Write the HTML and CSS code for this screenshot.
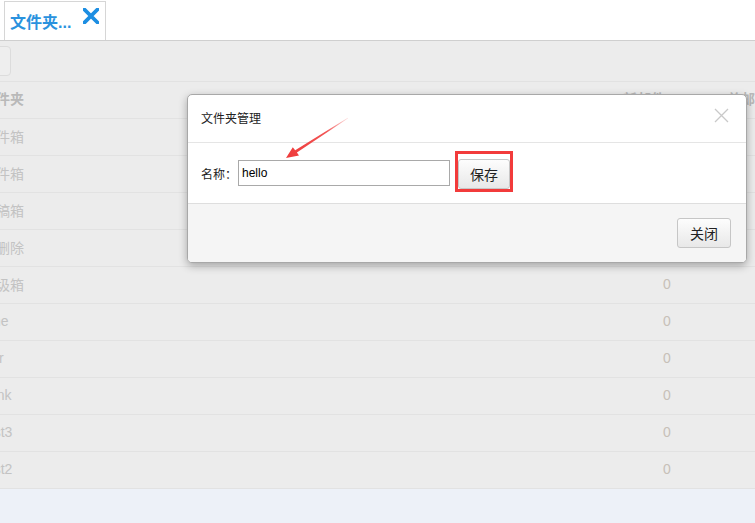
FILE: index.html
```html
<!DOCTYPE html>
<html>
<head>
    <title>文件夹管理</title>
    <meta charset="utf-8" />
    <link rel="stylesheet" href="styles.css">
</head>
<body>
    <div class="tabbar">
        <div class="tab">
            <span class="tab-title">文件夹...</span>
            <svg class="tab-close" width="16" height="16" viewBox="0 0 16 16">
                <path d="M1.5 1.5 L14.5 14.5 M14.5 1.5 L1.5 14.5" stroke="#1d8ee2" stroke-width="3.8" stroke-linecap="square" />
            </svg>
        </div>
    </div>

    <div class="page">
        <div class="toolbar"><span class="tool-btn"></span></div>

        <div class="grid">
            <div class="row head"><span class="name">文件夹</span><span class="num">新邮件</span><span class="total">总邮件</span></div>
            <div class="row"><span class="name">收件箱</span><span class="num"></span><span class="total"></span></div>
            <div class="row"><span class="name">发件箱</span><span class="num"></span><span class="total"></span></div>
            <div class="row"><span class="name">草稿箱</span><span class="num"></span><span class="total"></span></div>
            <div class="row"><span class="name">已删除</span><span class="num"></span><span class="total"></span></div>
            <div class="row"><span class="name">垃圾箱</span><span class="num">0</span><span class="total"></span></div>
            <div class="row"><span class="name">One</span><span class="num">0</span><span class="total"></span></div>
            <div class="row"><span class="name">Bar</span><span class="num">0</span><span class="total"></span></div>
            <div class="row"><span class="name">Junk</span><span class="num">0</span><span class="total"></span></div>
            <div class="row"><span class="name">test3</span><span class="num">0</span><span class="total"></span></div>
            <div class="row"><span class="name">test2</span><span class="num">0</span><span class="total"></span></div>
        </div>
        <div class="bottom"></div>

        <!-- folder dialog -->
        <div class="modal">
            <div class="modal-head">
                <span class="modal-title">文件夹管理</span>
                <svg class="modal-x" width="15" height="15" viewBox="0 0 15 15">
                    <path d="M1 1 L14 14 M14 1 L1 14" stroke="#c9c9c9" stroke-width="1.3" />
                </svg>
            </div>
            <div class="modal-body">
                <span class="label">名称：</span>
                <input class="name-input" type="text" value="hello" />
                <span class="mark"><button class="btn">保存</button></span>
            </div>
            <div class="modal-foot">
                <button class="btn">关闭</button>
            </div>
        </div>

        <svg class="arrow" width="75" height="52" viewBox="0 0 75 52">
            <defs>
                <linearGradient id="fade" x1="68" y1="8" x2="6" y2="48" gradientUnits="userSpaceOnUse">
                    <stop offset="0" stop-color="#f04040" stop-opacity="0.15" />
                    <stop offset="0.35" stop-color="#f04040" stop-opacity="0.9" />
                    <stop offset="1" stop-color="#ee3a3a" />
                </linearGradient>
            </defs>
            <polygon fill="url(#fade)" points="6,48 19,45.6 16.9,42.6 68.2,8.2 67.8,7.8 15.2,40.2 12.8,37.2" />
        </svg>
    </div>
</body>
</html>
```

FILE: styles.css
```css
html, body { margin:0; padding:0; }
body { width:755px; height:523px; overflow:hidden; background:#fff; font-family:"Liberation Sans", "Noto Sans CJK SC", sans-serif; }

.tabbar { height:40px; border-bottom:1px solid #cfcfcf; display:flex; align-items:flex-end; }
.tab { width:102px; height:39px; margin-left:4px; border:1px solid #d6d6d6; border-bottom:none; background:#fff; display:flex; align-items:flex-start; padding-left:5px; box-sizing:border-box; }
.tab-title { font-size:16px; font-weight:bold; color:#2a92de; line-height:16px; margin-top:13px; }
.tab-close { margin-left:12px; margin-top:6px; }

.page { position:relative; height:482px; background:#ececec; }
.toolbar { height:40px; display:flex; align-items:center; }
.tool-btn { width:30px; height:28px; margin-left:-21px; border:1px solid #dcdcdc; border-radius:4px; background:#eeeeee; }

.grid { width:773px; margin-left:-18px; border-bottom:1px solid #e2e2e2; }
.row { display:grid; grid-template-columns:1fr 100px 40px; height:36px; box-sizing:border-box; padding-bottom:2px; border-top:1px solid #e2e2e2; align-items:center; font-size:14px; color:#c3c3c3; height:37px; }
.row.head { font-weight:bold; color:#b9b9b9; padding-bottom:5px; }
.num { text-align:center; padding-left:4px; color:#c7c0b8; }
.head .num { text-align:left; padding-left:8px; color:#b9b9b9; }
.total { padding-left:12px; white-space:nowrap; }
.bottom { height:34px; background:#edf1f8; }

.modal { position:absolute; left:187px; top:53px; width:560px; height:169px; box-sizing:border-box; border:1px solid #a8a8a8; border-radius:5px; background:#fff; box-shadow:0 3px 8px rgba(0,0,0,0.3); display:flex; flex-direction:column; overflow:hidden; }
.modal-head { height:47px; border-bottom:1px solid #e5e5e5; display:flex; align-items:center; justify-content:space-between; padding:0 17px 0 13px; }
.modal-title { font-size:12px; color:#222; margin-top:-2px; }
.modal-x { margin-top:-6px; }
.modal-body { height:60px; border-bottom:1px solid #dedede; display:flex; align-items:center; padding-left:13px; font-size:12px; color:#222; }
.label { width:37px; }
.name-input { width:212px; height:26px; box-sizing:border-box; border:1px solid #a9a9a9; padding:0 3px; font-family:"Liberation Sans", sans-serif; font-size:12px; color:#000; outline:none; }
.mark { display:flex; margin-left:5px; margin-top:-4px; padding-top:5px; border:3px solid #f23b3b; }
.btn { height:30px; padding:0 11px; border:1px solid #c6c6c6; border-radius:3px; background:linear-gradient(#fdfdfd, #e8e8e8); font-family:"Noto Sans CJK SC", sans-serif; font-size:14px; color:#222; }
.mark .btn { width:52px; }
.modal-foot { flex:1; background:#f5f5f5; display:flex; align-items:center; justify-content:flex-end; padding-right:15px; }
.modal-foot .btn { width:54px; height:30px; }

.arrow { position:absolute; left:280px; top:69px; }
```
